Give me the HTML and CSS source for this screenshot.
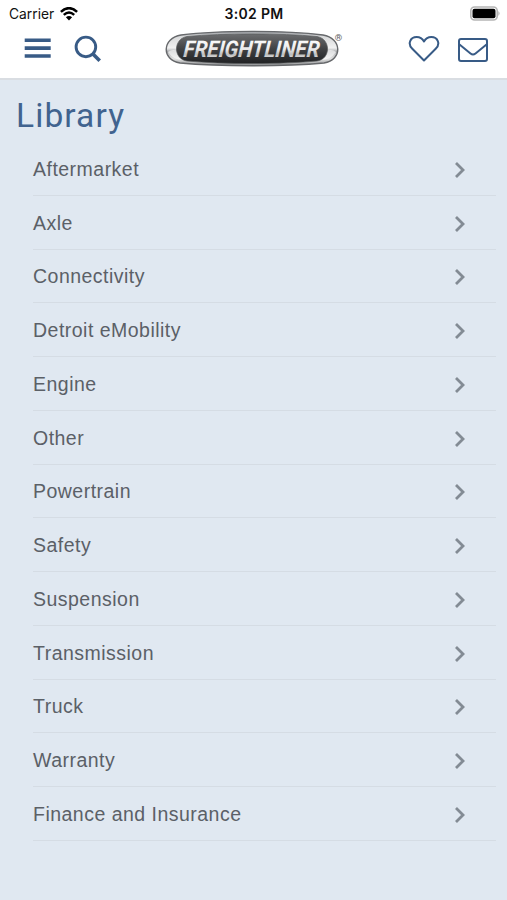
FILE: index.html
```html
<!DOCTYPE html>
<html lang="en">
<head>
<meta charset="utf-8">
<title>Library</title>
<link rel="stylesheet" href="styles.css">
</head>
<body>
<header class="header">
  <div class="status">
    <div class="carrier"><span>Carrier</span>
      <svg width="18" height="14" viewBox="0 0 18 14" fill="none" stroke="#000" stroke-width="2.5"><path d="M.9 4.9Q9-2.6 17.1 4.9M3.8 7.9Q9 3.2 14.2 7.9"/><path d="M9 13.4 5.9 10.3Q9 7.8 12.1 10.3Z" fill="#000" stroke="none"/></svg>
    </div>
    <time class="time">3:02 PM</time>
    <svg class="battery" width="32" height="16" viewBox="0 0 32 16"><rect x=".8" y="1" width="26.4" height="13" rx="3.8" fill="#fff" stroke="#b5b5b5" stroke-width="1.6"/><rect x="2.5" y="2.7" width="23" height="9.6" rx="2" fill="#000"/><path d="M28.3 5.1Q31 7.5 28.3 9.9Z" fill="#b5b5b5"/></svg>
  </div>
  <nav class="nav">
    <div class="tools">
      <svg width="28" height="24" viewBox="0 0 28 24" fill="none" stroke="#385b86" stroke-width="3.6"><path d="M.7 3.2h26M.7 11.1h26M.7 19h26"/></svg>
      <svg width="28" height="28" viewBox="0 0 28 28" fill="none" stroke="#385b86"><circle cx="11.9" cy="11.9" r="9.8" stroke-width="2.9"/><path d="m18.5 18.5 7.2 7.2" stroke-width="3.6"/></svg>
    </div>
    <svg class="logo" width="180" height="38" viewBox="0 0 180 38">
      <defs>
        <linearGradient id="chrome" x1="0" y1="0" x2="0" y2="1"><stop offset="0" stop-color="#92959a"/><stop offset=".15" stop-color="#d8d9da"/><stop offset=".48" stop-color="#f1f1f1"/><stop offset=".58" stop-color="#b1b3b5"/><stop offset=".8" stop-color="#e2e2e2"/><stop offset="1" stop-color="#8b8d8f"/></linearGradient>
        <linearGradient id="plate" x1="0" y1="0" x2="0" y2="1"><stop offset="0" stop-color="#6d6e70"/><stop offset=".5" stop-color="#414244"/><stop offset="1" stop-color="#202123"/></linearGradient>
        <linearGradient id="letters" x1="0" y1="0" x2="0" y2="1"><stop offset=".1" stop-color="#fff"/><stop offset=".5" stop-color="#e9e9e9"/><stop offset=".68" stop-color="#bcbdbe"/><stop offset="1" stop-color="#fff"/></linearGradient>
      </defs>
      <path d="M16 5C54 .1 120 .1 158 5C177 8 178 30 159 33C120 36.6 54 36.6 15 33C-4 30-3 8 16 5Z" fill="url(#chrome)" stroke="#67696c" stroke-width="1.4"/>
      <path d="M3 22Q8 18 15 22L20 30Q9 31 3 22ZM171 22Q166 18 159 22L154 30Q165 31 171 22Z" fill="#fff" opacity=".6"/>
      <path d="M22 6.5C58 3.1 116 3.1 152 6.5C166 9 166 29 152 31C116 34.4 58 34.4 22 31C8 29 8 9 22 6.5Z" fill="url(#plate)" stroke="#555759" stroke-width=".7"/>
      <text class="wordmark" transform="translate(18 26.9) skewX(-5)" textLength="136" lengthAdjust="spacingAndGlyphs" fill="url(#letters)">FREIGHTLINER</text>
      <text class="registered" x="169.8" y="11.2">®</text>
    </svg>
    <div class="tools actions">
      <svg width="32" height="28" viewBox="0 0 32 28" fill="none" stroke="#385b86" stroke-width="2" stroke-linejoin="round"><path d="M16 25.5 4.3 13.8C-.8 8.8 2.3 2 8.7 2C12.3 2 14.6 4 16 6.5C17.4 4 19.7 2 23.3 2C29.7 2 32.8 8.8 27.7 13.8Z"/></svg>
      <svg width="30" height="25" viewBox="0 0 30 25" fill="none" stroke="#385b86" stroke-width="2"><rect x="1" y="2" width="28" height="22" rx="2"/><path d="m1.5 7.5 11 9q2.5 2 5 0l11-9"/></svg>
    </div>
  </nav>
</header>
<main>
  <h1 class="title">Library</h1>
  <ul class="list">
    <li class="row"><span>Aftermarket</span><svg class="chevron" viewBox="0 0 12 18"><path d="m2 2 7 7-7 7"/></svg></li>
    <li class="row"><span>Axle</span><svg class="chevron" viewBox="0 0 12 18"><path d="m2 2 7 7-7 7"/></svg></li>
    <li class="row"><span>Connectivity</span><svg class="chevron" viewBox="0 0 12 18"><path d="m2 2 7 7-7 7"/></svg></li>
    <li class="row"><span>Detroit eMobility</span><svg class="chevron" viewBox="0 0 12 18"><path d="m2 2 7 7-7 7"/></svg></li>
    <li class="row"><span>Engine</span><svg class="chevron" viewBox="0 0 12 18"><path d="m2 2 7 7-7 7"/></svg></li>
    <li class="row"><span>Other</span><svg class="chevron" viewBox="0 0 12 18"><path d="m2 2 7 7-7 7"/></svg></li>
    <li class="row"><span>Powertrain</span><svg class="chevron" viewBox="0 0 12 18"><path d="m2 2 7 7-7 7"/></svg></li>
    <li class="row"><span>Safety</span><svg class="chevron" viewBox="0 0 12 18"><path d="m2 2 7 7-7 7"/></svg></li>
    <li class="row"><span>Suspension</span><svg class="chevron" viewBox="0 0 12 18"><path d="m2 2 7 7-7 7"/></svg></li>
    <li class="row"><span>Transmission</span><svg class="chevron" viewBox="0 0 12 18"><path d="m2 2 7 7-7 7"/></svg></li>
    <li class="row"><span>Truck</span><svg class="chevron" viewBox="0 0 12 18"><path d="m2 2 7 7-7 7"/></svg></li>
    <li class="row"><span>Warranty</span><svg class="chevron" viewBox="0 0 12 18"><path d="m2 2 7 7-7 7"/></svg></li>
    <li class="row"><span>Finance and Insurance</span><svg class="chevron" viewBox="0 0 12 18"><path d="m2 2 7 7-7 7"/></svg></li>
  </ul>
</main>
</body>
</html>
```
FILE: styles.css
```css
* { box-sizing: border-box; }
body { margin: 0; height: 900px; overflow: hidden; background: #e0e8f1; font-family: "Liberation Sans", Arial, sans-serif; }
svg { display: block; flex: none; }
.header { height: 80px; background: #fff; border-bottom: 2px solid #d9dde2; }
.status { height: 27px; padding: 0 5px 0 9px; display: grid; grid-template-columns: 1fr auto 1fr; align-items: center; font: 13.8px/16px Inter, sans-serif; color: #111; }
.carrier { display: flex; align-items: center; gap: 6px; }
.time { margin-right: 3px; font-size: 14px; font-weight: 600; letter-spacing: .3px; }
.battery { justify-self: end; }
.nav { height: 44px; padding: 0 19px 0 24px; display: grid; grid-template-columns: 1fr 180px 1fr; align-items: center; }
.tools { display: flex; align-items: center; gap: 22px; }
.actions { justify-content: flex-end; gap: 18px; }
.logo { margin-left: -1px; }
.wordmark { font: italic 700 23px Roboto, sans-serif; }
.registered { font: 700 9.5px Roboto, sans-serif; fill: #666; }
.title { margin: 0; padding: 16px 0 0 16px; height: 62px; font: 400 33.5px/39px Roboto, sans-serif; letter-spacing: 1.1px; color: #41638f; }
.list { list-style: none; margin: 0 11px 0 33px; padding: 0; }
.row { height: 53.75px; padding: 2px 30px 0 0; display: flex; align-items: center; justify-content: space-between; border-bottom: 1px solid #d5dce4; font-size: 19.5px; letter-spacing: .48px; color: #5b6067; }
.chevron { width: 12px; height: 18px; margin-top: 1px; fill: none; stroke: #838b94; stroke-width: 2.8; }
```
